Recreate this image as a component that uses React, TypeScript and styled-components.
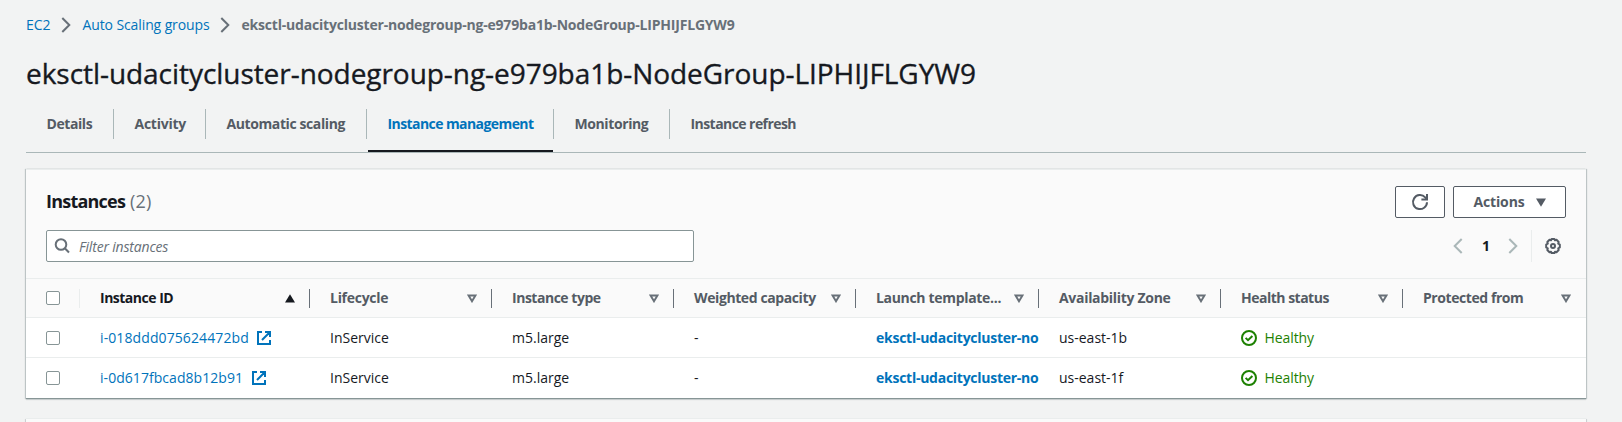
import React from "react";
import styled, { createGlobalStyle, css } from "styled-components";

const color = {
  page: "#f2f3f3",
  header: "#fafafa",
  text: "#16191f",
  muted: "#545b64",
  faint: "#687078",
  link: "#0073bb",
  line: "#eaeded",
  strong: "#879596",
  tabLine: "#aab7b8",
  ok: "#1d8102",
};

const GlobalStyle = createGlobalStyle`
  * { box-sizing: border-box; }
  body {
    margin: 0;
    background: ${color.page};
    color: ${color.text};
    font: 14px/22px "Open Sans", "Noto Sans", sans-serif;
  }
`;

const Page = styled.main`
  display: flex;
  flex-direction: column;
  width: 1560px;
  height: 422px;
  margin-left: 26px;
`;

/* Tracked text: $ls is the letter spacing in pixels. */
const Label = styled.span<{ $ls?: number }>`
  white-space: nowrap;
  letter-spacing: ${(p) => p.$ls ?? 0}px;
`;

const Breadcrumbs = styled.nav`
  display: flex;
  align-items: center;
  height: 22px;
  margin-top: 14px;
  color: ${color.link};
  svg { flex: none; margin: 0 11.5px 0 10.5px; }
`;

const Crumb = styled(Label)<{ $current?: boolean }>`
  ${(p) => p.$current && css`
    color: ${color.faint};
    font-weight: 700;
  `}
`;

const Title = styled.h1`
  margin: 19px 0 0;
  font-size: 28px;
  font-weight: 400;
  line-height: 36px;
  letter-spacing: -0.05px;
  -webkit-text-stroke: 0.35px ${color.text};
  white-space: nowrap;
`;

const Tabs = styled.div`
  display: flex;
  height: 48px;
  margin-top: 14px;
  padding-top: 4px;
  border-bottom: 1px solid ${color.tabLine};
`;

const Tab = styled.div<{ $width: number; $active?: boolean }>`
  width: ${(p) => p.$width}px;
  height: 43px;
  color: ${(p) => (p.$active ? color.link : color.muted)};
  font-weight: 700;
  ${(p) => p.$active && css`
    background: linear-gradient(${color.text}, ${color.text}) 1px 100% / calc(100% - 2px) 2px no-repeat;
  `}
`;

const TabLabel = styled.div`
  display: flex;
  align-items: center;
  height: 30px;
  padding-left: 20.5px;
  border-right: 1px solid ${color.tabLine};
  ${Tab}:last-child & { border-right: 0; }
`;

const Panel = styled.section`
  flex: none;
  margin-top: 16px;
  background: #fff;
  border-top: 1px solid ${color.line};
  box-shadow: 0 1px 1px 0 rgba(0, 28, 36, 0.3), 1px 1px 1px 0 rgba(0, 28, 36, 0.15),
    -1px 1px 1px 0 rgba(0, 28, 36, 0.15);
`;

const InstancesPanel = styled(Panel)`
  border-bottom: 1px solid ${color.strong};
  box-shadow: 0 1px 1px 0 rgba(0, 28, 36, 0.12), 1px 0 1px 0 rgba(0, 28, 36, 0.2),
    -1px 0 1px 0 rgba(0, 28, 36, 0.2);
`;

const NextPanel = styled(Panel)`
  flex: 1;
  margin-top: 19px;
  background: ${color.header};
`;

const PanelHeader = styled.header`
  display: flex;
  flex-direction: column;
  gap: 12px;
  padding: 16px 20px;
  background: ${color.header};
`;

const HeaderRow = styled.div`
  display: flex;
  align-items: center;
  justify-content: space-between;
  height: 32px;
`;

const Heading = styled.h2`
  display: flex;
  gap: 5px;
  margin: 0;
  padding-bottom: 2px;
  font-size: 18px;
  font-weight: 700;
`;

const Count = styled(Label)`
  color: ${color.faint};
  font-weight: 400;
`;

const Buttons = styled.div`
  display: flex;
  gap: 8px;
`;

const Button = styled.button<{ $width: number }>`
  display: flex;
  align-items: center;
  justify-content: center;
  gap: 11px;
  width: ${(p) => p.$width}px;
  height: 32px;
  padding: 0;
  border: 1px solid ${color.muted};
  border-radius: 2px;
  background: #fff;
  color: ${color.muted};
  font: inherit;
  font-weight: 700;
`;

const Search = styled.div`
  display: flex;
  align-items: center;
  gap: 9px;
  width: 648px;
  height: 32px;
  padding-left: 7px;
  border: 1px solid ${color.strong};
  border-radius: 2px;
  background: #fff;
  color: ${color.faint};
  font-style: italic;
  ${Label} { padding-top: 1px; }
`;

const Pagination = styled.div`
  display: flex;
  align-items: center;
  height: 32px;
`;

const PageNumber = styled.span`
  width: 45px;
  padding-left: 1px;
  text-align: center;
  font-weight: 700;
`;

const Preferences = styled.div`
  display: flex;
  align-items: center;
  height: 32px;
  margin-left: 13px;
  padding: 0 5px 0 13px;
  border-left: 1px solid ${color.line};
`;

const Row = styled.div<{ $head?: boolean }>`
  display: grid;
  grid-template-columns: 54px 230px 182px 182px 182px 183px 182px 182px minmax(0, 1fr);
  align-items: center;
  height: 40px;
  border-top: 1px solid ${color.line};
  &:last-child { height: 41px; padding-bottom: 1px; }
  ${(p) => p.$head && css`
    height: 39px;
    background: ${color.header};
    color: ${color.muted};
    font-weight: 700;
  `}
`;

const Cell = styled.div`
  display: flex;
  align-items: center;
  height: 22px;
  padding-left: 20px;
  overflow: hidden;
`;

const HeadCell = styled(Cell)<{ $sorted?: boolean }>`
  justify-content: space-between;
  height: 19px;
  padding-right: 14px;
  border-right: 1px solid ${color.faint};
  color: ${(p) => (p.$sorted ? color.text : "inherit")};
  line-height: 19px;
  overflow: visible;
  &:last-child { border-right: 0; padding-right: 15px; }
  ${Label} { padding-bottom: 1px; }
`;

const SelectCell = styled(Cell)<{ $divided?: boolean }>`
  height: 19px;
  border-right: 1px solid ${(p) => (p.$divided ? color.line : "transparent")};
`;

const Checkbox = styled.span`
  width: 14px;
  height: 14px;
  border: 1px solid ${color.strong};
  border-radius: 2px;
  background: #fff;
`;

const InstanceLink = styled(Cell)`
  gap: 8.5px;
  color: ${color.link};
`;

const TemplateLink = styled(Cell)`
  color: ${color.link};
  font-weight: 700;
`;

const Status = styled(Cell)`
  gap: 7.5px;
  color: ${color.ok};
`;

const Chevron = ({ back, small }: { back?: boolean; small?: boolean }) => (
  <svg width="10" height="16" viewBox="0 0 10 16" fill="none"
    stroke={small ? color.tabLine : color.faint} strokeWidth="2">
    <path d={back ? "M8.7 1 1.7 8l7 7" : "M1.3 1l7 7-7 7"} />
  </svg>
);

const SearchIcon = () => (
  <svg width="16" height="16" viewBox="0 0 16 16" fill="none" stroke={color.faint} strokeWidth="2">
    <circle cx="7" cy="6.5" r="5.3" />
    <path d="M10.8 10.3 15 14.5" />
  </svg>
);

const RefreshIcon = () => (
  <svg width="18" height="18" viewBox="0 0 18 18" fill="none" stroke={color.muted} strokeWidth="2">
    <path d="M16 9.2A7 7 0 1 1 14.2 4.4L15.6 6" />
    <path d="M16 1v5.6h-5.6" />
  </svg>
);

const GearIcon = () => (
  <svg width="16" height="16" viewBox="0 0 16 16" fill="none" stroke={color.muted} strokeWidth="2" strokeLinejoin="round">
    <path d="M6.6 1h2.8l.6 1.3 1.5-.5 2.2 2.2-.5 1.6 1.6.9v3l-1.6.9.5 1.6-2.2 2.2-1.5-.5-.6 1.3H6.6L6 13.7l-1.5.5L2.3 12l.5-1.6-1.6-.9v-3l1.6-.9L2.3 4l2.2-2.2 1.5.5z" />
    <circle cx="8" cy="8" r="2" />
  </svg>
);

const ExternalIcon = () => (
  <svg width="14" height="14" viewBox="0 0 14 14" fill="none" stroke={color.link} strokeWidth="2">
    <path d="M5 1H1v12h12V9M8 1h5v5M13 1 5 9" />
  </svg>
);

const HealthyIcon = () => (
  <svg width="16" height="16" viewBox="0 0 16 16" fill="none" stroke={color.ok} strokeWidth="2">
    <circle cx="8" cy="8" r="7" />
    <path d="m4.6 7.9 2.4 2.3 4.4-4.2" />
  </svg>
);

const SortIcon = ({ active }: { active?: boolean }) =>
  active ? (
    <svg width="10" height="9" viewBox="0 0 10 9" fill={color.text}><path d="M5 .3 10 8.5H0z" /></svg>
  ) : (
    <svg width="10" height="9" viewBox="0 0 10 9" fill="none" stroke={color.faint} strokeWidth="2">
      <path d="M1.5 1.4h7L5 7.2z" />
    </svg>
  );

const tabs = [
  { label: "Details", width: 88, ls: -0.42 },
  { label: "Activity", width: 92, ls: -0.25 },
  { label: "Automatic scaling", width: 161, ls: -0.4 },
  { label: "Instance management", width: 187, ls: -0.58, active: true },
  { label: "Monitoring", width: 116, ls: -0.4 },
  { label: "Instance refresh", width: 150, ls: -0.56 },
];

const columns = [
  { label: "Instance ID", ls: -0.5 },
  { label: "Lifecycle", ls: -0.28 },
  { label: "Instance type", ls: -0.48 },
  { label: "Weighted capacity", ls: -0.4 },
  { label: "Launch template...", ls: -0.32 },
  { label: "Availability Zone", ls: -0.3 },
  { label: "Health status", ls: -0.5 },
  { label: "Protected from", ls: -0.43 },
];

const instances = [
  { id: "i-018ddd075624472bd", ls: 0.1, zone: "us-east-1b" },
  { id: "i-0d617fbcad8b12b91", ls: 0.05, zone: "us-east-1f" },
];

export default function App() {
  return (
    <>
      <GlobalStyle />
      <Page>
        <Breadcrumbs>
          <Crumb $ls={-0.03}>EC2</Crumb>
          <Chevron />
          <Crumb $ls={-0.11}>Auto Scaling groups</Crumb>
          <Chevron />
          <Crumb $current $ls={-0.2}>eksctl-udacitycluster-nodegroup-ng-e979ba1b-NodeGroup-LIPHIJFLGYW9</Crumb>
        </Breadcrumbs>
        <Title>eksctl-udacitycluster-nodegroup-ng-e979ba1b-NodeGroup-LIPHIJFLGYW9</Title>
        <Tabs>
          {tabs.map((t) => (
            <Tab key={t.label} $width={t.width} $active={t.active}>
              <TabLabel><Label $ls={t.ls}>{t.label}</Label></TabLabel>
            </Tab>
          ))}
        </Tabs>
        <InstancesPanel>
          <PanelHeader>
            <HeaderRow>
              <Heading>
                <Label $ls={-0.78}>Instances</Label>
                <Count $ls={0.2}>(2)</Count>
              </Heading>
              <Buttons>
                <Button $width={50}><RefreshIcon /></Button>
                <Button $width={113}>
                  <Label $ls={-0.15}>Actions</Label>
                  <svg width="10" height="9" viewBox="0 0 10 9" fill={color.muted}><path d="M0 .5h10L5 8.7z" /></svg>
                </Button>
              </Buttons>
            </HeaderRow>
            <HeaderRow>
              <Search>
                <SearchIcon />
                <Label $ls={-0.18}>Filter instances</Label>
              </Search>
              <Pagination>
                <Chevron back small />
                <PageNumber>1</PageNumber>
                <Chevron small />
                <Preferences><GearIcon /></Preferences>
              </Pagination>
            </HeaderRow>
          </PanelHeader>
          <Row $head>
            <SelectCell $divided><Checkbox /></SelectCell>
            {columns.map((c, i) => (
              <HeadCell key={c.label} $sorted={i === 0}>
                <Label $ls={c.ls}>{c.label}</Label>
                <SortIcon active={i === 0} />
              </HeadCell>
            ))}
          </Row>
          {instances.map((it) => (
            <Row key={it.id}>
              <SelectCell><Checkbox /></SelectCell>
              <InstanceLink><Label $ls={it.ls}>{it.id}</Label><ExternalIcon /></InstanceLink>
              <Cell>InService</Cell>
              <Cell>m5.large</Cell>
              <Cell>-</Cell>
              <TemplateLink><Label $ls={-0.26}>eksctl-udacitycluster-no</Label></TemplateLink>
              <Cell><Label>{it.zone}</Label></Cell>
              <Status><HealthyIcon /><Label $ls={-0.08}>Healthy</Label></Status>
              <Cell />
            </Row>
          ))}
        </InstancesPanel>
        <NextPanel />
      </Page>
    </>
  );
}
